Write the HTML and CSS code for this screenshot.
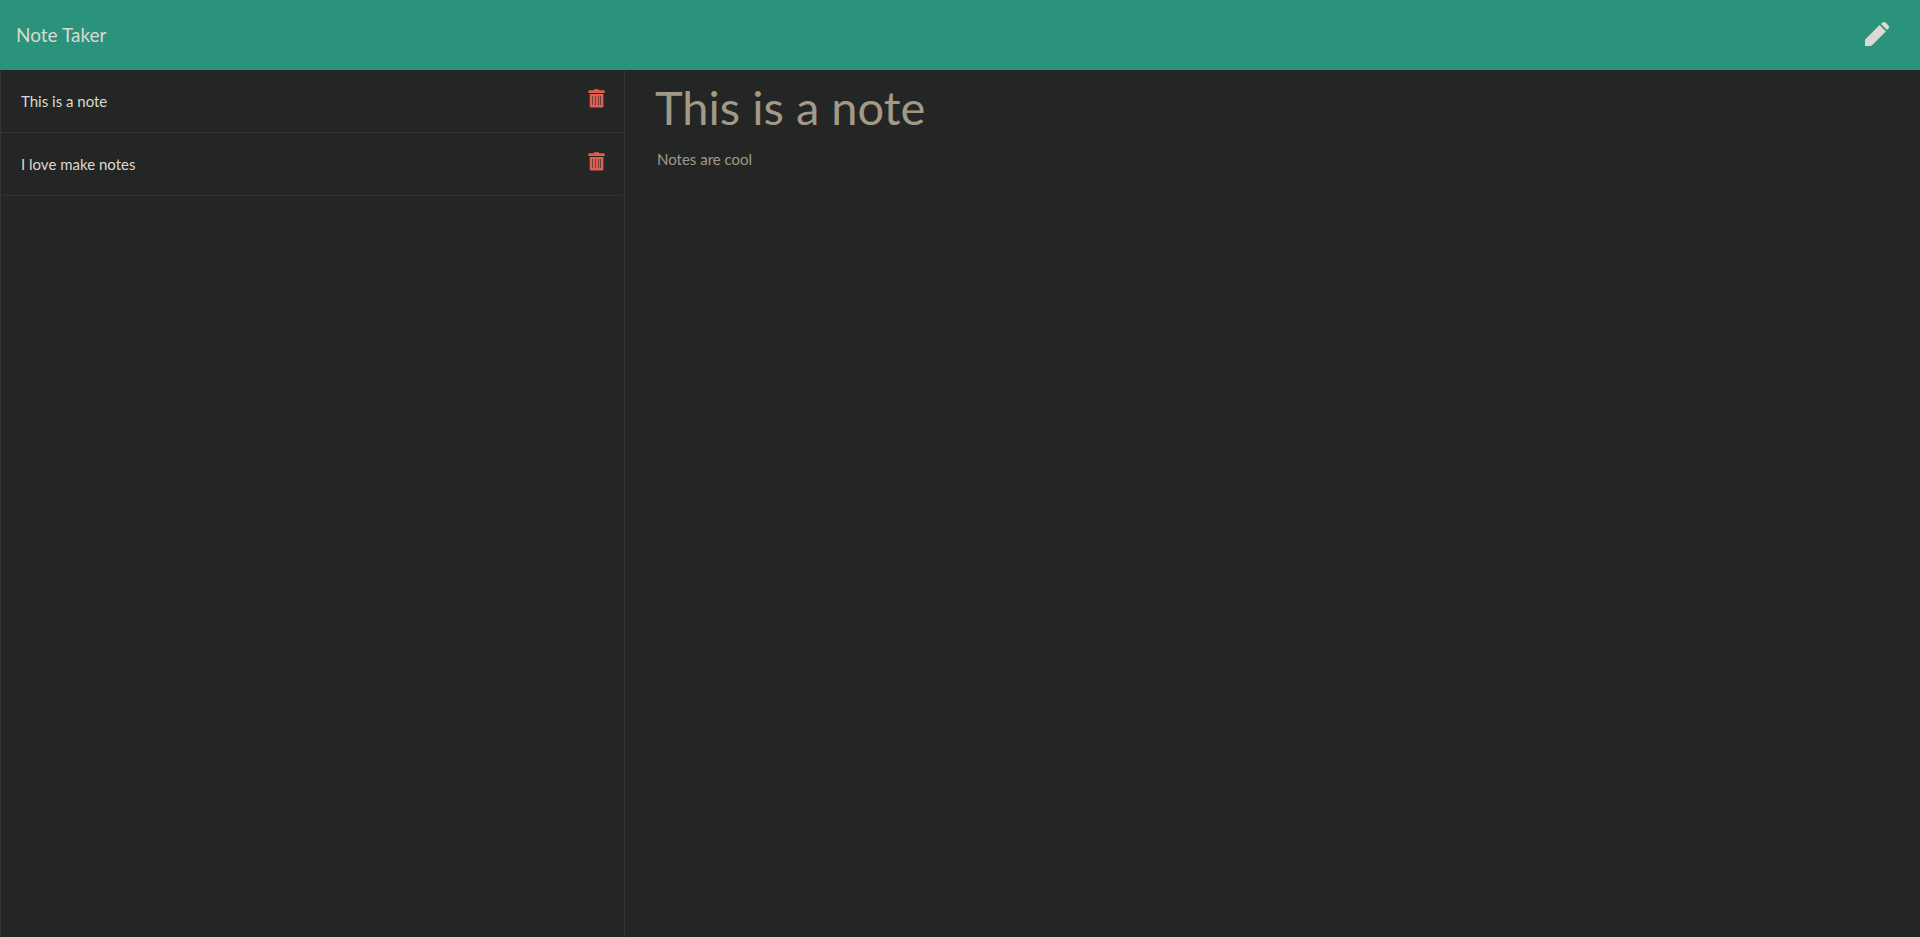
FILE: index.html
```html
<!DOCTYPE html>
<html lang="en">
<head>
<meta charset="UTF-8">
<meta name="viewport" content="width=device-width, initial-scale=1">
<title>Note Taker</title>
<link rel="stylesheet" href="styles.css">
</head>
<body>
<nav class="navbar">
  <a class="brand" href="#">Note Taker</a>
  <button class="icon-button new-note" type="button" aria-label="New note">
    <svg width="26" height="26" viewBox="0 0 26 26" fill="currentColor" aria-hidden="true">
      <path d="M15.6 4.1 21.9 10.4 8 24.3 6.5 25H1v-6.5L2.2 17.4z"/>
      <path d="m16.9 3 1.5-1.5c1-.8 2.3-.7 3.2.1l2.8 2.8c.9.9 1 2.2.1 3.2L23 9.1z"/>
    </svg>
  </button>
</nav>
<main class="layout">
  <aside class="sidebar">
    <ul class="note-list">
      <li class="note">
        <a class="note-title" href="#">This is a note</a>
        <button class="icon-button delete-note" type="button" aria-label="Delete This is a note">
          <svg width="17" height="19" viewBox="0 0 17 19" aria-hidden="true">
            <path fill="currentColor" d="M6 .3h5v1h4.7q1 0 1 1v1.6H.3V2.3q0-1 1-1H6zM1.7 5h13.7v12.5q0 1-1 1H2.7q-1 0-1-1z"/>
            <path class="slot" d="M4 7h1v9H4zm3 0h1v9H7zm3 0h1v9h-1zm2 0h1v9h-1z"/>
          </svg>
        </button>
      </li>
      <li class="note">
        <a class="note-title" href="#">I love make notes</a>
        <button class="icon-button delete-note" type="button" aria-label="Delete I love make notes">
          <svg width="17" height="19" viewBox="0 0 17 19" aria-hidden="true">
            <path fill="currentColor" d="M6 .3h5v1h4.7q1 0 1 1v1.6H.3V2.3q0-1 1-1H6zM1.7 5h13.7v12.5q0 1-1 1H2.7q-1 0-1-1z"/>
            <path class="slot" d="M4 7h1v9H4zm3 0h1v9H7zm3 0h1v9h-1zm2 0h1v9h-1z"/>
          </svg>
        </button>
      </li>
    </ul>
  </aside>
  <section class="editor">
    <input class="editor-title" type="text" aria-label="Note title" value="This is a note" readonly>
    <textarea class="editor-text" aria-label="Note text" readonly>Notes are cool</textarea>
  </section>
</main>
</body>
</html>
```
FILE: styles.css
```css
* {
  box-sizing: border-box;
}

body {
  display: flex;
  flex-direction: column;
  min-height: 100vh;
  margin: 0;
  background: #242625;
  color: #ddd9d0;
  font: 15px/22px Lato, sans-serif;
}

.navbar {
  display: flex;
  align-items: center;
  justify-content: space-between;
  min-height: 70px;
  padding: 0 30px 0 16px;
  background: #2b927c;
}

.brand {
  color: inherit;
  font-size: 19px;
  line-height: 28px;
  text-decoration: none;
}

.icon-button {
  display: flex;
  padding: 0;
  border: 0;
  background: none;
  color: inherit;
  cursor: pointer;
}

.new-note {
  padding-bottom: 2px;
}

.layout {
  display: grid;
  grid-template-columns: 625px 1fr;
  flex: 1;
}

.sidebar {
  border: solid #323434;
  border-width: 0 1px;
}

.note-list {
  margin: 0;
  padding: 0;
  list-style: none;
}

.note {
  display: flex;
  align-items: flex-start;
  justify-content: space-between;
  padding: 19px 19px 20px 20px;
  border-bottom: 1px solid #323232;
}

.note:last-child {
  border-radius: 0 0 4px 4px;
}

.note-title {
  padding-top: 1px;
  color: inherit;
  text-decoration: none;
}

.delete-note {
  color: #dc604f;
}

.slot {
  fill: #242625;
  opacity: 0.6;
}

.editor {
  display: flex;
  flex-direction: column;
  padding: 7px 30px;
}

.editor-title,
.editor-text {
  width: 100%;
  border: 0;
  padding: 0;
  outline: 0;
  background: none;
  color: #a29987;
  font-family: inherit;
}

.editor-title {
  height: 60px;
  font-size: 47px;
}

.editor-text {
  flex: 1;
  margin-top: 11px;
  padding-left: 2px;
  font-size: 15px;
  line-height: 22px;
  resize: none;
}
```
